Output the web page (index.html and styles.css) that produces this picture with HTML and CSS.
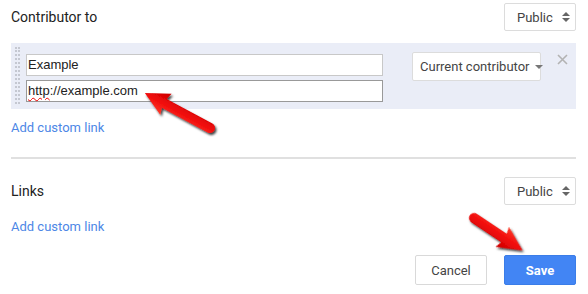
FILE: index.html
```html
<!DOCTYPE html>
<html lang="en">
<head>
  <meta charset="UTF-8" />
  <title>Links editor</title>
  <link rel="stylesheet" href="styles.css">
</head>
<body>

  <div class="panel">
    <div class="section-head">
      <h3>Contributor to</h3>
      <div class="select">Public <span class="spin"></span></div>
    </div>

    <div class="link-row">
      <div class="grip"></div>
      <div class="fields">
        <div class="input">Example</div>
        <div class="input focused"><span class="typo">http</span>://example.com</div>
      </div>
      <div class="dropdown">Current contributor <span class="caret"></span></div>
      <svg class="close" width="11" height="11" viewBox="0 0 11 11">
        <path d="M1 1 L10 10 M10 1 L1 10" stroke="#b3b3b3" stroke-width="1.6"/>
      </svg>
    </div>

    <a class="add-link" href="#">Add custom link</a>

    <hr class="divider">

    <div class="section-head">
      <h3>Links</h3>
      <div class="select">Public <span class="spin"></span></div>
    </div>

    <a class="add-link" href="#">Add custom link</a>

    <div class="actions">
      <button class="btn">Cancel</button>
      <button class="btn primary">Save</button>
    </div>
  </div>

  <!-- annotation arrows drawn over the screenshot -->
  <svg class="arrows" width="588" height="294" viewBox="0 0 588 294">
    <defs>
      <linearGradient id="red" x1="0" y1="0" x2="0" y2="1">
        <stop offset="0" stop-color="#ff3a2a"/>
        <stop offset="0.5" stop-color="#f00a0a"/>
        <stop offset="1" stop-color="#c80000"/>
      </linearGradient>
      <filter id="shadow" x="-30%" y="-30%" width="160%" height="160%">
        <feDropShadow dx="1.5" dy="2" stdDeviation="1.2" flood-color="#000" flood-opacity="0.75"/>
      </filter>
    </defs>
    <g filter="url(#shadow)">
      <path transform="translate(210,128) rotate(208.3)" fill="url(#red)"
            d="M0 -5 L52 -5 L50 -12 L74 0 L50 12 L52 5 L0 5 A5 5 0 0 1 0 -5 Z"/>
      <path transform="translate(474,218) rotate(33.7)" fill="url(#red)"
            d="M0 -5 L36 -5 L34 -12 L58 0 L34 12 L36 5 L0 5 A5 5 0 0 1 0 -5 Z"/>
    </g>
  </svg>

</body>
</html>
```

FILE: styles.css
```css
body {
  font-family: Roboto, 'Liberation Sans', sans-serif;
  background-color: #fff;
  color: #333;
  margin: 0;
}
.panel {
  padding: 3px 12px 0 11px;
}
.section-head {
  display: flex;
  justify-content: space-between;
  align-items: center;
  height: 28px;
}
.section-head h3 {
  margin: 0;
  font-size: 14px;
  font-weight: 400;
  color: #222;
}
.select {
  box-sizing: border-box;
  width: 72px;
  height: 28px;
  border: 1px solid #dcdcdc;
  border-radius: 2px;
  font-size: 13px;
  color: #444;
  display: flex;
  align-items: center;
  padding-left: 12px;
  gap: 9px;
}
.spin {
  position: relative;
  width: 8px;
  height: 10px;
}
.spin::before,
.spin::after {
  content: "";
  position: absolute;
  left: 0;
  border-left: 4px solid transparent;
  border-right: 4px solid transparent;
}
.spin::before {
  top: 0;
  border-bottom: 4px solid #666;
}
.spin::after {
  bottom: 0;
  border-top: 4px solid #666;
}
.link-row {
  margin-top: 12px;
  height: 66px;
  background-color: #eaedf7;
  display: flex;
  align-items: flex-start;
}
.grip {
  width: 1px;
  height: 57px;
  margin: 4px 0 0 4px;
  border-left: 2px dotted #c5c8d1;
  border-right: 2px dotted #c5c8d1;
}
.fields {
  margin: 11px 0 0 6px;
  display: flex;
  flex-direction: column;
  gap: 4px;
}
.input {
  box-sizing: border-box;
  width: 357px;
  height: 22px;
  background: #fff;
  border: 1px solid #c8c8c8;
  padding-left: 1px;
  font-family: 'Liberation Sans', Arial, sans-serif;
  font-size: 13px;
  line-height: 20px;
  color: #222;
}
.input.focused {
  border-color: #999;
}
.typo {
  text-decoration: underline wavy #e00;
  text-underline-offset: 2px;
  text-decoration-thickness: 1px;
}
.dropdown {
  box-sizing: border-box;
  flex-shrink: 0;
  white-space: nowrap;
  margin: 9px 0 0 29px;
  width: 129px;
  height: 29px;
  background: #fff;
  border: 1px solid #dcdcdc;
  border-radius: 2px;
  font-size: 13px;
  color: #444;
  display: flex;
  align-items: center;
  padding-left: 7px;
  gap: 5px;
}
.caret {
  margin-top: 1px;
  border-left: 4px solid transparent;
  border-right: 4px solid transparent;
  border-top: 4px solid #777;
}
.close {
  flex-shrink: 0;
  margin: 11px 0 0 16px;
}
.add-link {
  display: block;
  margin-top: 10px;
  font-size: 13px;
  line-height: 18px;
  color: #4d87e6;
  text-decoration: none;
}
.divider {
  margin: 20px 0 18px;
  border: none;
  border-top: 2px solid #e0e0e0;
}
.section-head + .add-link {
  margin-top: 13px;
}
.actions {
  display: flex;
  justify-content: flex-end;
  gap: 17px;
  margin-top: 19px;
}
.btn {
  box-sizing: border-box;
  width: 72px;
  height: 30px;
  font-family: Roboto, 'Liberation Sans', sans-serif;
  font-size: 13px;
  color: #444;
  background: #fff;
  border: 1px solid #d9d9d9;
  border-radius: 2px;
}
.btn.primary {
  background: #4285f4;
  border-color: #3b7de8;
  color: #fff;
  font-weight: bold;
}
.arrows {
  position: absolute;
  left: 0;
  top: 0;
  pointer-events: none;
}
```
